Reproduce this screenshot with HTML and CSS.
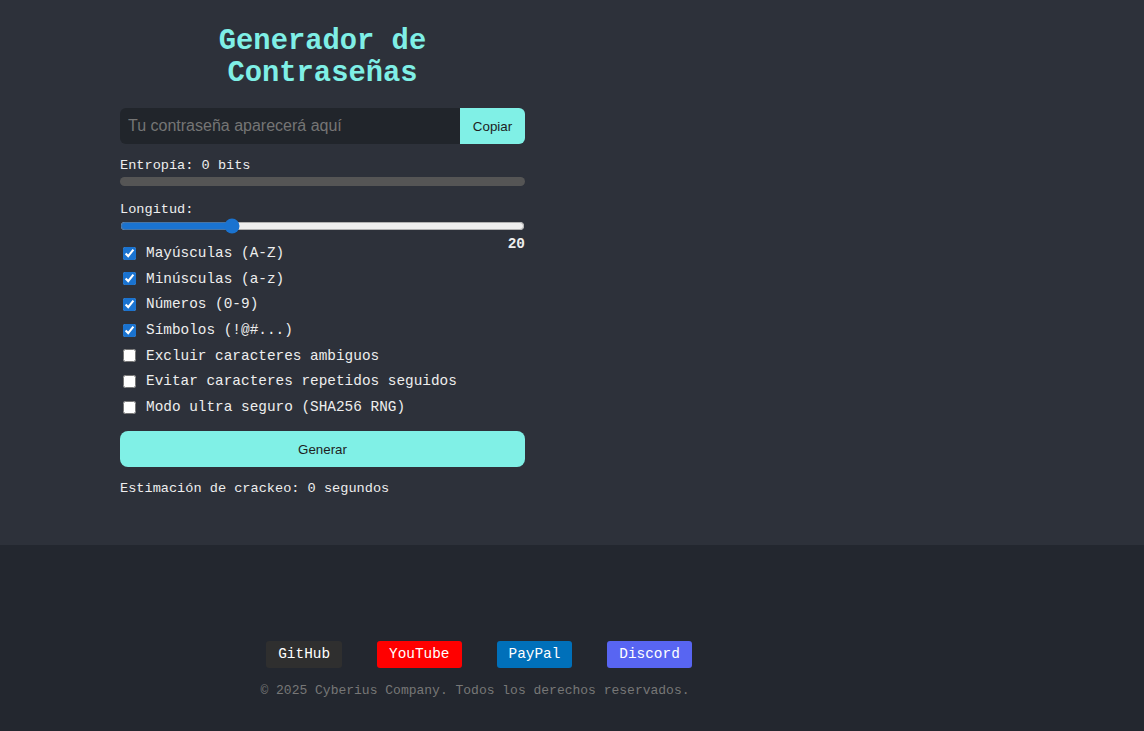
FILE: index.html
```html
<!DOCTYPE html>
<html lang="es">
<head>
<meta charset="utf-8">
<title>Generador de Contraseñas</title>
<link rel="stylesheet" href="styles.css">
</head>
<body>
<main class="main">
  <div class="card">
    <h1 class="title">Generador de<br>Contraseñas</h1>
    <div class="output-row">
      <input class="output" type="text" placeholder="Tu contraseña aparecerá aquí" readonly>
      <button class="copy">Copiar</button>
    </div>
    <div class="entropy">Entropía: 0 bits</div>
    <div class="bar"></div>
    <div class="len-label">Longitud:</div>
    <input class="range" type="range" min="4" max="64" value="20">
    <div class="len-value">20</div>
    <div class="options">
      <label class="opt"><input type="checkbox" checked>Mayúsculas (A-Z)</label>
      <label class="opt"><input type="checkbox" checked>Minúsculas (a-z)</label>
      <label class="opt"><input type="checkbox" checked>Números (0-9)</label>
      <label class="opt"><input type="checkbox" checked>Símbolos (!@#...)</label>
      <label class="opt"><input type="checkbox">Excluir caracteres ambiguos</label>
      <label class="opt"><input type="checkbox">Evitar caracteres repetidos seguidos</label>
      <label class="opt"><input type="checkbox">Modo ultra seguro (SHA256 RNG)</label>
    </div>
    <button class="generate">Generar</button>
    <div class="crack">Estimación de crackeo: 0 segundos</div>
  </div>
</main>
<footer class="footer">
  <div class="footer-inner">
    <nav class="links">
      <a class="link github" href="#">GitHub</a>
      <a class="link youtube" href="#">YouTube</a>
      <a class="link paypal" href="#">PayPal</a>
      <a class="link discord" href="#">Discord</a>
    </nav>
    <p class="copy-text">© 2025 Cyberius Company. Todos los derechos reservados.</p>
  </div>
</footer>
</body>
</html>
```
FILE: styles.css
```css
html, body {
  margin: 0;
  padding: 0;
}
body {
  background: #23272f;
  font-family: "Liberation Mono", "Courier New", monospace;
  color: #eeeeee;
}
.main {
  background: #2d313a;
  height: 545px;
  padding-left: 120px;
  box-sizing: border-box;
  overflow: hidden;
}
.card {
  width: 405px;
  display: flex;
  flex-direction: column;
}
.title {
  font-size: 28.8px;
  font-weight: bold;
  color: #7fefe6;
  text-align: center;
  margin: 26px 0 18px;
  line-height: 32px;
}
.output-row {
  display: flex;
  height: 36px;
}
.output {
  flex: 1;
  min-width: 0;
  background: #21252b;
  border: none;
  border-radius: 6px 0 0 6px;
  padding: 0 8px;
  font-family: "Liberation Sans", Arial, sans-serif;
  font-size: 16px;
  color: #ddd;
  outline: none;
}
.output::placeholder {
  color: #757575;
}
.copy {
  width: 65px;
  border: none;
  border-radius: 0 6px 6px 0;
  background: #80f0e6;
  color: #1e1e1e;
  font-family: "Liberation Sans", Arial, sans-serif;
  font-size: 13.33px;
  padding: 0;
}
.entropy {
  font-size: 13.6px;
  margin-top: 14px;
  line-height: 16px;
}
.bar {
  height: 9px;
  border-radius: 5px;
  background: #555555;
  margin-top: 3px;
}
.len-label {
  font-size: 13.6px;
  line-height: 16px;
  margin-top: 16px;
}
.range {
  width: 100%;
  margin: 0 0 2px;
  height: 16px;
  accent-color: #1a73d0;
}
.len-value {
  text-align: right;
  font-weight: bold;
  font-size: 14.4px;
  line-height: 16px;
}
.options {
  display: flex;
  flex-direction: column;
  gap: 9.7px;
  margin-top: -7px;
}
.opt {
  display: flex;
  align-items: center;
  font-size: 14.4px;
  line-height: 16px;
}
.opt input {
  margin: 0 10px 0 3px;
  width: 13px;
  height: 13px;
  accent-color: #1a73d0;
}
.generate {
  margin-top: 16px;
  height: 36px;
  border: none;
  border-radius: 8px;
  background: #80f0e6;
  color: #1e1e1e;
  font-family: "Liberation Sans", Arial, sans-serif;
  font-size: 13.33px;
}
.crack {
  font-size: 13.6px;
  line-height: 16px;
  margin-top: 14px;
}
.footer {
  height: 186px;
  padding-top: 96px;
  box-sizing: border-box;
}
.footer-inner {
  width: 950px;
  text-align: center;
}
.links {
  display: flex;
  justify-content: center;
  gap: 35px;
  padding-left: 8px;
}
.link {
  font-size: 14.4px;
  line-height: 15px;
  padding: 6px 12px;
  border-radius: 3px;
  color: #fff;
  text-decoration: none;
}
.github { background: #2f2f2f; }
.youtube { background: #ff0000; }
.paypal { background: #0070ba; }
.discord { background: #5865f2; }
.copy-text {
  margin: 15px 0 0;
  font-size: 13px;
  color: #777777;
}
```
